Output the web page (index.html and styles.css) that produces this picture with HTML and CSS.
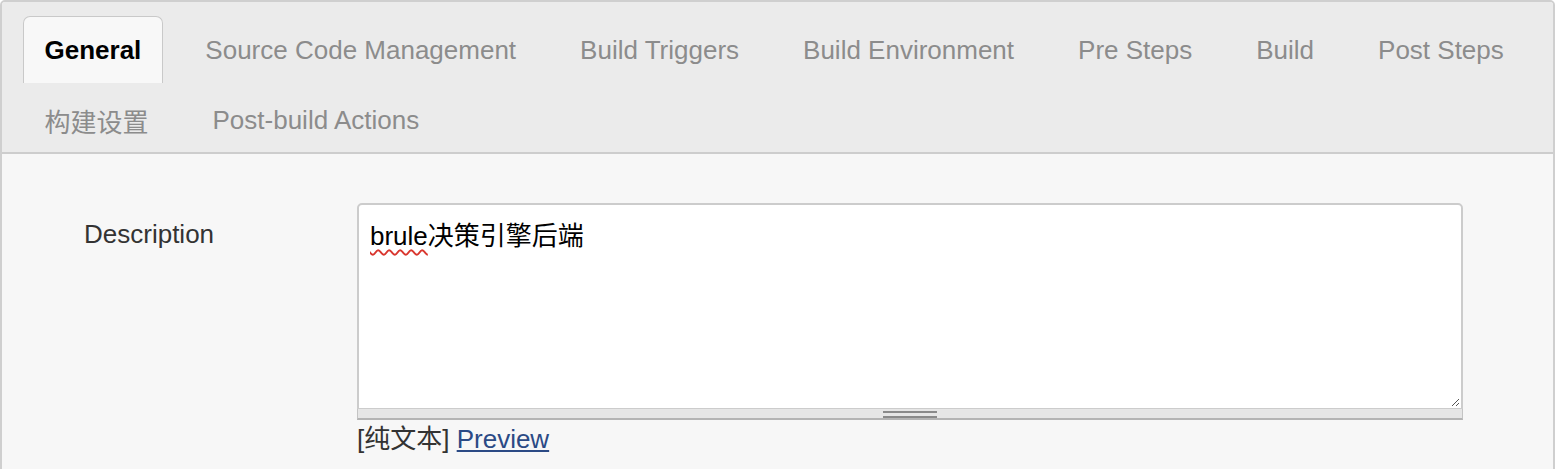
FILE: index.html
```html
<!DOCTYPE html>
<html lang="zh">
<head>
<meta charset="utf-8">
<title>General</title>
<link rel="stylesheet" href="styles.css">
</head>
<body>
<div class="panel">
  <div class="tabbar">
    <div class="tab active">General</div>
    <div class="tab">Source Code Management</div>
    <div class="tab">Build Triggers</div>
    <div class="tab">Build Environment</div>
    <div class="tab">Pre Steps</div>
    <div class="tab">Build</div>
    <div class="tab">Post Steps</div>
    <div class="tab">构建设置</div>
    <div class="tab">Post-build Actions</div>
  </div>
  <div class="content">
    <div class="row">
      <div class="label">Description</div>
      <div class="field">
        <div class="textarea"><span class="misspelled">brule</span>决策引擎后端<span class="resize-handle"><svg width="10" height="10" viewBox="0 0 10 10"><path d="M9 2 L2 9 M9 6 L6 9" stroke="#555" stroke-width="1" fill="none"/></svg></span></div>
        <div class="grippie"><span class="grip"></span></div>
        <div class="preview-line">[纯文本] <a class="preview" href="#">Preview</a></div>
      </div>
    </div>
  </div>
</div>
</body>
</html>
```
FILE: styles.css
```css
html, body {
  margin: 0;
  padding: 0;
  background: #ffffff;
}
body {
  font-family: "Liberation Sans", "Noto Sans CJK SC", sans-serif;
  font-size: 26px;
  color: #333;
}
.panel {
  width: 1551px;
  height: 480px;
  border: 2px solid #cfcfcf;
  border-radius: 5px;
  background: #f7f7f7;
  overflow: hidden;
}
.tabbar {
  display: flex;
  flex-wrap: wrap;
  column-gap: 21px;
  row-gap: 3px;
  padding: 14px 21px 0 21px;
  background: #ebebeb;
  border-bottom: 2px solid #cdcdcd;
  height: 136px;
  box-sizing: content-box;
  align-content: flex-start;
}
.tab {
  height: 67px;
  box-sizing: border-box;
  padding: 0 20.5px;
  display: flex;
  align-items: center;
  color: #8c8c8c;
  border: 1px solid transparent;
  border-bottom: none;
  white-space: nowrap;
}
.tab.active {
  background: #f8f8f8;
  border-color: #c9c9c9;
  border-radius: 7px 7px 0 0;
  color: #000;
  font-weight: bold;
}
.content {
  padding: 49px 0 0 0;
}
.row {
  display: grid;
  grid-template-columns: 355px 1106px;
}
.label {
  padding-left: 82px;
  padding-top: 16px;
  color: #333;
}
.field {
  display: flex;
  flex-direction: column;
}
.textarea {
  position: relative;
  height: 206px;
  box-sizing: border-box;
  border: 2px solid #cccccc;
  border-radius: 5px 5px 0 0;
  border-bottom-width: 1px;
  background: #fff;
  color: #000;
  padding: 16px 11px 0;
  line-height: 30px;
}
.misspelled {
  text-decoration: underline wavy #d9362e;
  text-decoration-thickness: 1.5px;
  text-underline-offset: 4px;
}
.resize-handle {
  position: absolute;
  right: 1px;
  bottom: 1px;
  width: 10px;
  height: 10px;
  display: block;
  line-height: 0;
}
.grippie {
  height: 9px;
  background: #e6e6e6;
  border: 1px solid #c4c4c4;
  border-top: none;
  border-bottom: 2px solid #b4b4b4;
  display: flex;
  justify-content: center;
}
.grip {
  width: 54px;
  height: 3px;
  margin-top: 2px;
  border-top: 2px solid #8a8a8a;
  border-bottom: 2px solid #8a8a8a;
}
.preview-line {
  padding-top: 4px;
  color: #333;
  line-height: 30px;
}
.preview {
  color: #2b4a85;
  text-decoration: underline;
}
```
